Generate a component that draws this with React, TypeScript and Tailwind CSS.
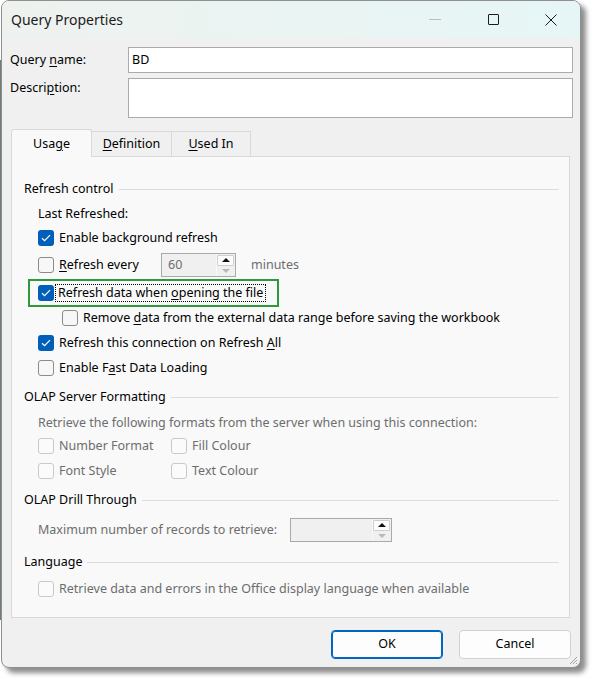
import type { ReactNode } from "react";

const FONT = "font-['Noto_Sans','Open_Sans',sans-serif]";

function Check({ checked = false, disabled = false }: { checked?: boolean; disabled?: boolean }) {
  if (checked) {
    return (
      <span className="flex h-[16px] w-[16px] shrink-0 items-center justify-center rounded-[3px] bg-[#005fb8]">
        <svg width="10" height="8" viewBox="0 0 10 8" fill="none">
          <path d="M1 4.2 L3.6 6.6 L9 1.2" stroke="white" strokeWidth="1.2" />
        </svg>
      </span>
    );
  }
  return (
    <span
      className={`h-[16px] w-[16px] shrink-0 rounded-[3px] border ${
        disabled ? "border-[#c9c9c9] bg-[#fbfbfb]" : "border-[#8b8b8b] bg-[#f7f7f7]"
      }`}
    />
  );
}

function Row({ h, children, className = "" }: { h: string; children: ReactNode; className?: string }) {
  return <div className={`flex items-center ${h} ${className}`}>{children}</div>;
}

function GroupTitle({ h, children }: { h: string; children: ReactNode }) {
  return (
    <div className={`flex w-full items-center gap-[5px] pl-[12px] pr-[10px] ${h}`}>
      <span className="text-black">{children}</span>
      <div className="h-px flex-1 bg-[#dcdcdc]" />
    </div>
  );
}

function Spinner({ value, w }: { value?: string; w: string }) {
  return (
    <div className={`flex h-[24px] ${w} border border-[#a9a9a9] bg-[#f0f0f0]`}>
      <span className="flex flex-1 items-center pl-[6px] text-[#6d6d6d]">{value}</span>
      <div className="flex w-[19px] flex-col gap-px border-l border-[#f8f8f8] py-px pr-px">
        <span className="flex flex-1 items-center justify-center rounded-[1px] border border-[#cfcfcf] bg-[#fcfcfc]">
          <svg width="8" height="4" viewBox="0 0 8 4">
            <path d="M0 4 L4 0 L8 4 Z" fill="#111" />
          </svg>
        </span>
        <span className="flex flex-1 items-center justify-center bg-[#f0f0f0]">
          <svg width="8" height="4" viewBox="0 0 8 4">
            <path d="M0 0 L4 4 L8 0 Z" fill="#b9b9b9" />
          </svg>
        </span>
      </div>
    </div>
  );
}

export default function App() {
  return (
    <div className={`h-[684px] w-[597px] bg-white ${FONT} text-[12.5px] leading-none text-black`}>
      <div className="flex h-[684px] w-[597px] items-start">
        <div className="mt-[60px] h-[560px] w-px bg-[#6f7f74]" />
        <div className="relative flex h-[668px] w-[580px] flex-col overflow-hidden rounded-[8px] border border-[#8f8f8f] bg-[#f0f0f0] shadow-[5px_5px_5px_rgba(0,0,0,0.45)]">
          {/* Title bar */}
          <div className="flex h-[37px] shrink-0 items-center bg-gradient-to-r from-[#eef2ef] to-[#e6f6f6]">
            <span className="pl-[9px] text-[14px] text-[#1b1b1b]">Query Properties</span>
            <div className="ml-auto flex items-center">
              <span className="flex h-[37px] w-[58px] items-center justify-center">
                <span className="h-px w-[12px] bg-[#bdbdbd]" />
              </span>
              <span className="flex h-[37px] w-[58px] items-center justify-center">
                <span className="h-[11px] w-[11px] rounded-[1px] border border-[#1b1b1b]" />
              </span>
              <span className="flex h-[37px] w-[58px] items-center justify-center">
                <svg width="12" height="12" viewBox="0 0 12 12">
                  <path d="M0.5 0.5 L11.5 11.5 M11.5 0.5 L0.5 11.5" stroke="#1b1b1b" strokeWidth="1" />
                </svg>
              </span>
            </div>
          </div>

          {/* Name / description */}
          <div className="flex flex-col gap-[5px] pl-[8px] pr-[7px] pt-[9px]">
            <div className="flex items-center">
              <span className="w-[118px]">
                Query <u className="underline-offset-2">n</u>ame:
              </span>
              <div className="flex h-[26px] flex-1 items-center border border-[#ababab] bg-white pl-[3px]">BD</div>
            </div>
            <div className="flex items-start">
              <span className="w-[118px] pt-[4px]">
                Descri<u className="underline-offset-2">p</u>tion:
              </span>
              <div className="h-[40px] flex-1 border border-[#ababab] bg-white" />
            </div>
          </div>

          {/* Tabs */}
          <div className="mt-[11px] flex items-end pl-[9px]">
            <div className="relative z-10 -mb-px flex h-[28px] w-[81px] items-center justify-center rounded-t-[3px] border border-b-0 border-[#d9d9d9] bg-[#f9f9f9] pt-[1px]">
              Usa<u className="underline-offset-2">g</u>e
            </div>
            <div className="flex h-[25px] w-[80px] items-center justify-center border border-b-0 border-l-0 border-[#d9d9d9] bg-[#f0f0f0] pt-[1px]">
              <u className="underline-offset-2">D</u>efinition
            </div>
            <div className="flex h-[25px] w-[79px] items-center justify-center border border-b-0 border-l-0 border-[#d9d9d9] bg-[#f0f0f0] pt-[1px]">
              <u className="underline-offset-2">U</u>sed In
            </div>
          </div>

          {/* Tab panel */}
          <div className="ml-[9px] flex h-[462px] w-[559px] flex-col border border-[#d9d9d9] bg-[#f9f9f9] pt-[19px]">
            <GroupTitle h="h-[26px]">Refresh control</GroupTitle>
            <Row h="h-[25px]" className="pl-[26px]">
              Last Refreshed:
            </Row>
            <Row h="h-[22px]" className="gap-[5px] pl-[26px]">
              <Check checked />
              <span>
                Enable back<u className="underline-offset-2">g</u>round refresh
              </span>
            </Row>
            <Row h="h-[32px]" className="pl-[26px]">
              <Check />
              <span className="ml-[5px] w-[102px]">
                <u className="underline-offset-2">R</u>efresh every
              </span>
              <Spinner value="60" w="w-[75px]" />
              <span className="ml-[15px] text-[#6d6d6d]">minutes</span>
            </Row>
            <Row h="h-[24px]" className="relative gap-[5px] pl-[26px]">
              <div className="pointer-events-none absolute left-[16px] top-[-2px] h-[28px] w-[251px] border-2 border-[#2f9a3c]" />
              <Check checked />
              <span className="-ml-[3px] px-[2px] py-[2px] outline outline-1 outline-dotted outline-black">
                Refresh data when <u className="underline-offset-2">o</u>pening the file
              </span>
            </Row>
            <Row h="h-[26px]" className="gap-[5px] pl-[50px]">
              <Check />
              <span>
                Remove <u className="underline-offset-2">d</u>ata from the external data range before saving the workbook
              </span>
            </Row>
            <Row h="h-[24px]" className="gap-[5px] pl-[26px]">
              <Check checked />
              <span>
                Refresh this connection on Refresh <u className="underline-offset-2">A</u>ll
              </span>
            </Row>
            <Row h="h-[26px]" className="gap-[5px] pl-[26px]">
              <Check />
              <span>
                Enable F<u className="underline-offset-2">a</u>st Data Loading
              </span>
            </Row>

            <GroupTitle h="h-[32px]">OLAP Server Formatting</GroupTitle>
            <Row h="h-[20px]" className="pl-[26px] text-[#6d6d6d]">
              Retrieve the following formats from the server when using this connection:
            </Row>
            <Row h="h-[26px]" className="pl-[26px] text-[#6d6d6d]">
              <Check disabled />
              <span className="ml-[5px] w-[112px]">Number Format</span>
              <Check disabled />
              <span className="ml-[5px]">Fill Colour</span>
            </Row>
            <Row h="h-[24px]" className="pl-[26px] text-[#6d6d6d]">
              <Check disabled />
              <span className="ml-[5px] w-[112px]">Font Style</span>
              <Check disabled />
              <span className="ml-[5px]">Text Colour</span>
            </Row>

            <GroupTitle h="h-[34px]">OLAP Drill Through</GroupTitle>
            <Row h="h-[26px]" className="pl-[26px] text-[#6d6d6d]">
              <span className="w-[252px]">Maximum number of records to retrieve:</span>
              <Spinner w="w-[102px]" />
            </Row>

            <GroupTitle h="h-[38px]">Language</GroupTitle>
            <Row h="h-[16px]" className="gap-[5px] pl-[26px] text-[#6d6d6d]">
              <Check disabled />
              <span>Retrieve data and errors in the Office display language when available</span>
            </Row>
          </div>

          {/* Buttons */}
          <div className="flex justify-end gap-[16px] pr-[9px] pt-[12px]">
            <button className="flex h-[29px] w-[112px] items-center justify-center rounded-[4px] border border-[#0067c0] bg-[#fdfdfd] shadow-[inset_0_0_0_1px_#0067c0]">
              OK
            </button>
            <button className="flex h-[29px] w-[112px] items-center justify-center rounded-[4px] border border-[#d1d1d1] bg-[#fdfdfd]">
              Cancel
            </button>
          </div>

          {/* Resize grip */}
          <svg className="absolute bottom-[2px] right-[2px]" width="10" height="10" viewBox="0 0 10 10">
            <path d="M9 2 L2 9 M9 5 L5 9 M9 8 L8 9" stroke="#a0a0a0" strokeWidth="1" />
          </svg>
        </div>
      </div>
    </div>
  );
}
